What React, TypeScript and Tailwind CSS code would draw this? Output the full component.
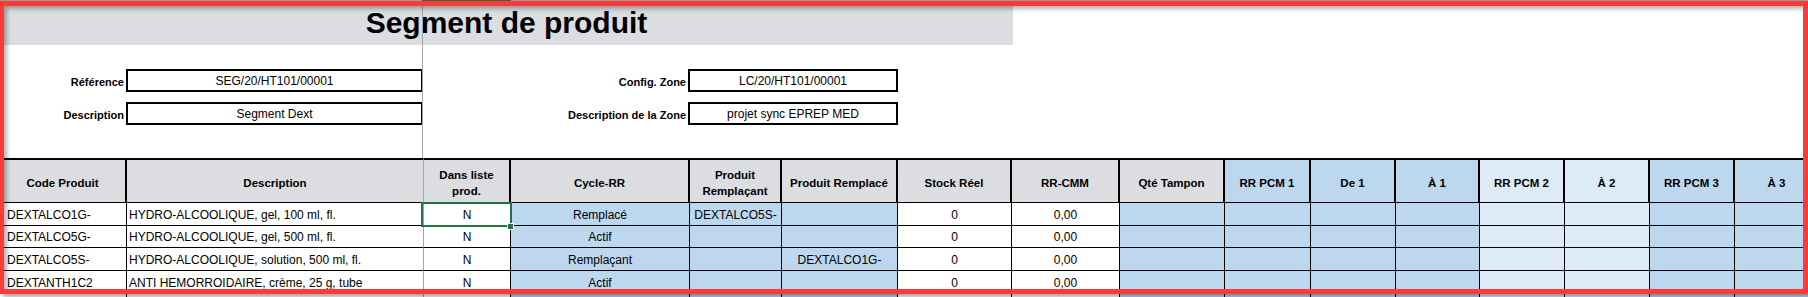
import React from "react";

type Col = {
  label: React.ReactNode;
  hBg: string;
  dBg: string;
  align: "left" | "center";
  pad: string;
  freezeR?: boolean;
  freezeL?: boolean;
};

const GRAY = "bg-[#dcdde0]";
const BLUE = "bg-[#bdd7ee]";
const LIGHT = "bg-[#ddebf7]";
const WHITE = "bg-white";

const cols: Col[] = [
  { label: "Code Produit", hBg: GRAY, dBg: WHITE, align: "left", pad: "pl-[7px]" },
  { label: "Description", hBg: GRAY, dBg: WHITE, align: "left", pad: "pl-[2px]", freezeR: true },
  { label: (<>Dans liste<br />prod.</>), hBg: GRAY, dBg: WHITE, align: "center", pad: "", freezeL: true },
  { label: "Cycle-RR", hBg: GRAY, dBg: BLUE, align: "center", pad: "" },
  { label: (<>Produit<br />Remplaçant</>), hBg: GRAY, dBg: BLUE, align: "center", pad: "" },
  { label: "Produit Remplacé", hBg: GRAY, dBg: BLUE, align: "center", pad: "" },
  { label: "Stock Réel", hBg: GRAY, dBg: WHITE, align: "center", pad: "" },
  { label: "RR-CMM", hBg: GRAY, dBg: WHITE, align: "center", pad: "" },
  { label: "Qté Tampon", hBg: GRAY, dBg: BLUE, align: "center", pad: "" },
  { label: "RR PCM 1", hBg: BLUE, dBg: BLUE, align: "center", pad: "" },
  { label: "De 1", hBg: BLUE, dBg: BLUE, align: "center", pad: "" },
  { label: "À 1", hBg: BLUE, dBg: BLUE, align: "center", pad: "" },
  { label: "RR PCM 2", hBg: LIGHT, dBg: LIGHT, align: "center", pad: "" },
  { label: "À 2", hBg: LIGHT, dBg: LIGHT, align: "center", pad: "" },
  { label: "RR PCM 3", hBg: BLUE, dBg: BLUE, align: "center", pad: "" },
  { label: "À 3", hBg: BLUE, dBg: BLUE, align: "center", pad: "" },
];

const rows: { h: string; cells: string[] }[] = [
  { h: "h-[23px]", cells: ["DEXTALCO1G-", "HYDRO-ALCOOLIQUE, gel, 100 ml, fl.", "N", "Remplacé", "DEXTALCO5S-", "", "0", "0,00"] },
  { h: "h-[22px]", cells: ["DEXTALCO5G-", "HYDRO-ALCOOLIQUE, gel, 500 ml, fl.", "N", "Actif", "", "", "0", "0,00"] },
  { h: "h-[23px]", cells: ["DEXTALCO5S-", "HYDRO-ALCOOLIQUE, solution, 500 ml, fl.", "N", "Remplaçant", "", "DEXTALCO1G-", "0", "0,00"] },
  { h: "h-[23px]", cells: ["DEXTANTH1C2", "ANTI HEMORROIDAIRE, crème, 25 g, tube", "N", "Actif", "", "", "0", "0,00"] },
  { h: "h-[23px]", cells: [] },
];

function FieldRow({
  mt,
  l1,
  v1,
  l2,
  v2,
}: {
  mt: string;
  l1: string;
  v1: string;
  l2: string;
  v2: string;
}) {
  return (
    <div className={`flex h-[23px] ${mt}`}>
      <div className="w-[126px] flex items-end justify-end pr-[2px] pb-[3px] text-[11px] leading-[13px] font-bold whitespace-nowrap">
        {l1}
      </div>
      <div className="w-[297px] border-2 border-black flex items-end justify-center pb-[2px] text-[12px] leading-[14px] whitespace-nowrap">
        {v1}
      </div>
      <div className="w-[88px]" />
      <div className="w-[177px] flex items-end justify-end pr-[2px] pb-[3px] text-[11px] leading-[13px] font-bold whitespace-nowrap">
        {l2}
      </div>
      <div className="w-[210px] border-2 border-black flex items-end justify-center pb-[2px] text-[12px] leading-[14px] whitespace-nowrap">
        {v2}
      </div>
    </div>
  );
}

export default function App() {
  return (
    <div className="relative w-[1808px] h-[297px] overflow-hidden bg-white text-black font-['Liberation_Sans',Arial,sans-serif]">
      <div className="flex flex-col">
        <div className="h-[45px] w-[1013px] bg-[#dcdde0] flex items-center justify-center text-[30px] leading-[45px] font-bold">
          Segment de produit
        </div>

        <FieldRow mt="mt-[24px]" l1="Référence" v1="SEG/20/HT101/00001" l2="Config. Zone" v2="LC/20/HT101/00001" />
        <FieldRow mt="mt-[10px]" l1="Description" v1="Segment Dext" l2="Description de la Zone" v2="projet sync EPREP MED" />

        <div className="mt-[33px] grid w-[1820px] grid-cols-[127px_296px_88px_179px_92px_116px_114px_108px_105px_86px_85px_84px_85px_85px_85px_85px]">
          {cols.map((c, i) => (
            <div
              key={`h${i}`}
              className={`h-[45px] border-t-2 border-b border-black ${c.freezeR ? "" : "border-r-2"} ${c.freezeL ? "border-l border-l-[#a5a5a5]" : ""} ${c.hBg} flex items-center justify-center text-center pt-[3px] text-[11.5px] leading-[16px] font-bold whitespace-nowrap`}
            >
              <span>{c.label}</span>
            </div>
          ))}
          {rows.map((r, ri) =>
            cols.map((c, ci) => (
              <div
                key={`r${ri}c${ci}`}
                className={`${r.h} border-b border-black ${c.freezeR ? "" : "border-r"} ${c.freezeL ? "border-l border-l-[#a5a5a5]" : ""} ${c.dBg} flex items-end pb-[3px] ${c.align === "left" ? "justify-start" : "justify-center"} ${c.pad} text-[12px] leading-[13px] whitespace-nowrap overflow-hidden`}
              >
                {r.cells[ci] ?? ""}
              </div>
            ))
          )}
        </div>
      </div>

      {/* freeze pane line above table */}
      <div className="absolute left-[422px] top-0 w-px h-[158px] bg-[#a5a5a5]" />

      {/* selected cell */}
      <div className="absolute left-[421px] top-[202px] w-[91px] h-[25px] border-2 border-[#217346]" />
      <div className="absolute left-[507px] top-[223px] w-[7px] h-[7px] bg-[#217346] border border-white" />

      {/* top strip (column header edge) */}
      <div className="absolute left-0 top-0 w-full h-px bg-[#9d9d9d]" />
      <div className="absolute left-[422px] top-0 w-[89px] h-px bg-[#217346]" />

      {/* red annotation frame */}
      <div className="absolute left-0 top-px w-[1808px] h-[293px] border-[5px] border-l-4 border-[#fd3a3a] shadow-[3px_3px_4px_rgba(0,0,0,0.35),inset_3px_3px_4px_rgba(0,0,0,0.3)]" />
    </div>
  );
}
